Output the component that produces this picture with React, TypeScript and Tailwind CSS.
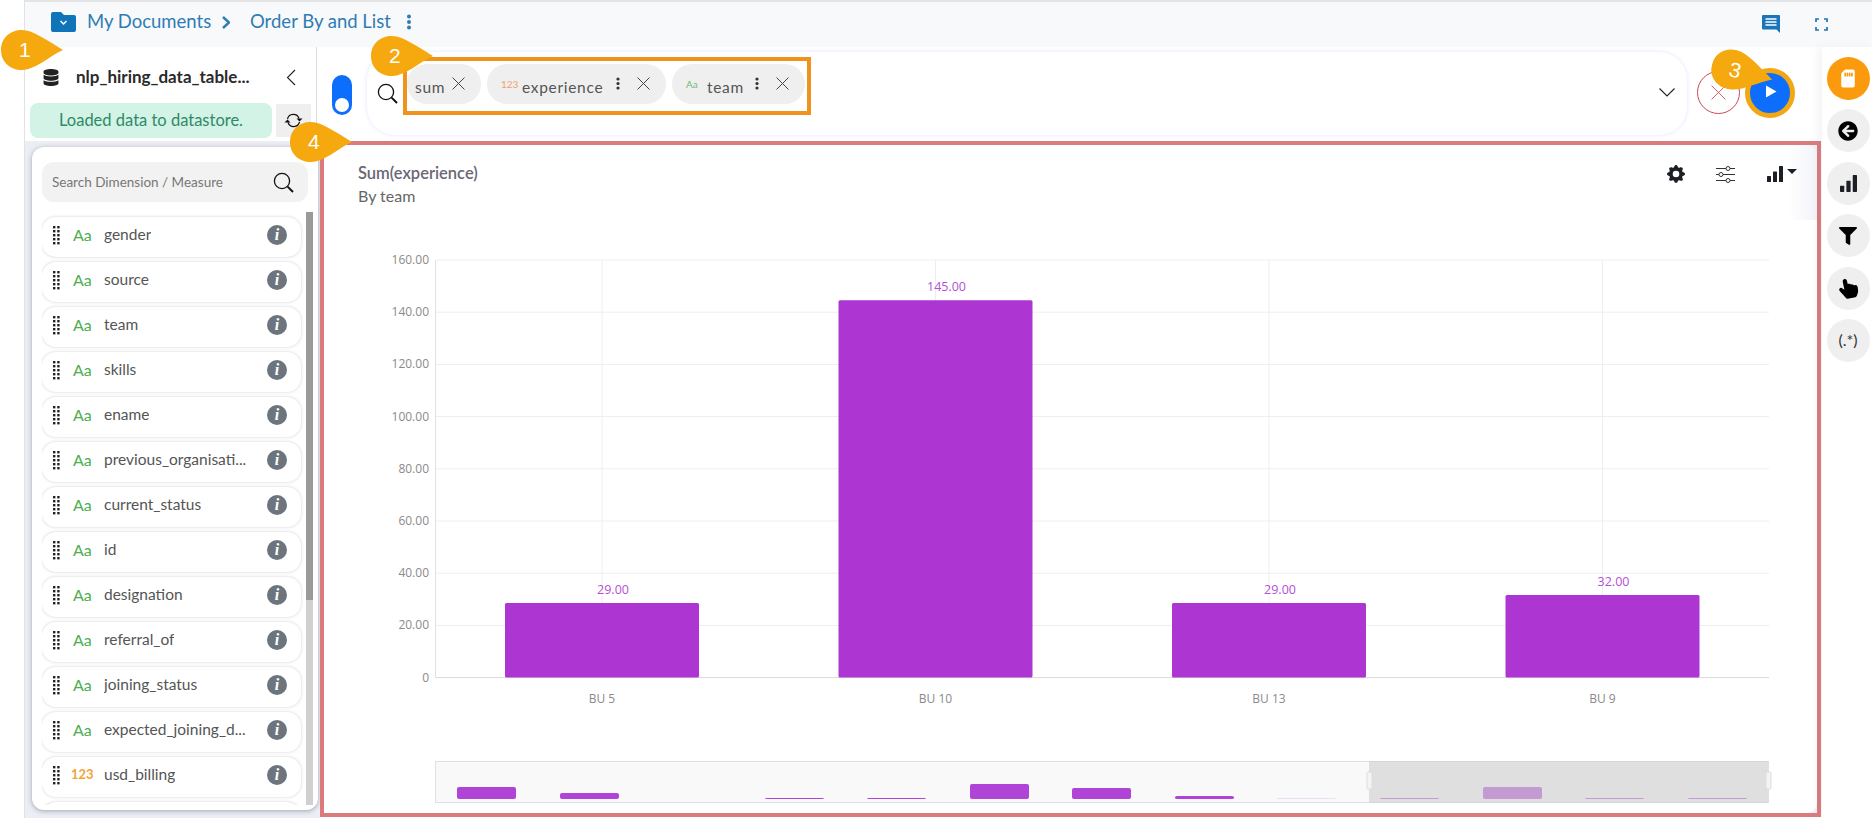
import React from "react";
import { BsGearFill, BsHandIndexThumbFill, BsSdCardFill } from "react-icons/bs";
import { FaArrowCircleLeft, FaDatabase, FaFilter } from "react-icons/fa";

const font = "font-['Lato','Noto_Sans',sans-serif]";

const fields = [
  { name: "gender", kind: "Aa" },
  { name: "source", kind: "Aa" },
  { name: "team", kind: "Aa" },
  { name: "skills", kind: "Aa" },
  { name: "ename", kind: "Aa" },
  { name: "previous_organisati...", kind: "Aa" },
  { name: "current_status", kind: "Aa" },
  { name: "id", kind: "Aa" },
  { name: "designation", kind: "Aa" },
  { name: "referral_of", kind: "Aa" },
  { name: "joining_status", kind: "Aa" },
  { name: "expected_joining_d...", kind: "Aa" },
  { name: "usd_billing", kind: "123" },
  { name: "", kind: "" },
];

// page coordinates minus the chart svg origin
const ox = 324;
const oy = 220;
const ticks = [160, 140, 120, 100, 80, 60, 40, 20, 0];
const bars = [
  { label: "BU 5", cx: 602, value: 29 },
  { label: "BU 10", cx: 935.5, value: 145 },
  { label: "BU 13", cx: 1269, value: 29 },
  { label: "BU 9", cx: 1602.5, value: 32 },
];
const mini = [
  [457, 787, 1],
  [560, 793, 1],
  [765, 798, 1],
  [867, 798, 1],
  [970, 784, 1],
  [1072, 788, 1],
  [1175, 796, 1],
  [1277, 798, 0.15],
  [1380, 798, 1],
  [1483, 787, 1],
  [1585, 798, 1],
  [1688, 798, 1],
];

function Callout({ n, className }: { n: string; className: string }) {
  return (
    <div className={`absolute z-20 h-[40px] w-[62px] ${className}`}>
      <svg viewBox="0 0 62 40" className="h-full w-full">
        <path d="M0 20C0 8 9 0 21 0C32 0 47 11 62 20C47 27 34 40 21 40C9 40 0 32 0 20Z" fill="#f6a90f" />
      </svg>
      <span className="absolute left-[18px] top-[6px] font-['Liberation_Sans',sans-serif] text-[21px] leading-[28px] text-white">{n}</span>
    </div>
  );
}

function Search({ size = 21 }: { size?: number }) {
  return (
    <svg width={size} height={size} viewBox="0 0 21 21" fill="none" stroke="#111">
      <circle cx="9" cy="9" r="7.6" strokeWidth="1.3" />
      <path d="M14.6 14.6L20 20" strokeWidth="2" />
    </svg>
  );
}

function Cross({ size = 13, color = "#444", weight = 1 }: { size?: number; color?: string; weight?: number }) {
  return (
    <svg width={size} height={size} viewBox="0 0 13 13" stroke={color} strokeWidth={weight}>
      <path d="M0.5 0.5L12.5 12.5M12.5 0.5L0.5 12.5" />
    </svg>
  );
}

function Kebab({ color = "#333", large }: { color?: string; large?: boolean }) {
  return (
    <svg width={large ? 6 : 4} height={large ? 16 : 13} viewBox="0 0 4 13" fill={color}>
      <circle cx="2" cy="2" r="1.6" />
      <circle cx="2" cy="6.5" r="1.6" />
      <circle cx="2" cy="11" r="1.6" />
    </svg>
  );
}

function Grip() {
  const dots = [];
  for (let r = 0; r < 5; r++) {
    dots.push(<rect key={`a${r}`} x="0" y={r * 4} width="2.4" height="2.4" />);
    dots.push(<rect key={`b${r}`} x="4.2" y={r * 4} width="2.4" height="2.4" />);
  }
  return (
    <svg width="7" height="19" viewBox="0 0 7 19" fill="#222" className="block">
      {dots}
    </svg>
  );
}

function BarsIcon({ size = 16 }: { size?: number }) {
  return (
    <svg width={size} height={size} viewBox="0 0 16 16" fill="#1c1f24">
      <rect x="0" y="10" width="4" height="6" rx="0.6" />
      <rect x="6" y="5.5" width="4" height="10.5" rx="0.6" />
      <rect x="12" y="0" width="4" height="16" rx="0.6" />
    </svg>
  );
}

function Chip({ badge, badgeClass, label, kebab, width }: { badge?: string; badgeClass?: string; label: string; kebab?: boolean; width: string }) {
  return (
    <div className={`flex h-[40px] items-center rounded-full bg-[#efefef] pb-[1px] ${width}`}>
      {badge && <span className={`ml-[14px] w-[21px] pt-[1px] text-[10px] ${badgeClass}`}>{badge}</span>}
      <span className={`pt-[8px] text-[15.5px] tracking-[0.7px] text-[#555] ${badge ? "" : "ml-[8px]"}`}>{label}</span>
      {kebab && (
        <span className="ml-auto flex items-center gap-[17px] pr-[16px]">
          <Kebab />
          <Cross />
        </span>
      )}
      {!kebab && (
        <span className="ml-[7px]">
          <Cross />
        </span>
      )}
    </div>
  );
}

function FieldRow({ name, kind }: { name: string; kind: string }) {
  return (
    <div className="flex h-[40px] w-[259px] shrink-0 items-center rounded-[14px] bg-white pb-[4px] shadow-[0_0_3px_rgba(60,60,90,0.25)]">
      <span className="ml-[11px] w-[8px]">{kind && <Grip />}</span>
      {kind === "123" ? (
        <span className="ml-[10px] w-[33px] text-[13px] font-bold text-[#f2a33a]">123</span>
      ) : (
        <span className="ml-[12px] w-[31px] text-[16px] text-[#4caf50]">{kind}</span>
      )}
      <span className="truncate text-[15.5px] text-[#555]">{name}</span>
      {kind && (
        <span className="ml-auto mr-[14px] flex h-[20px] w-[20px] shrink-0 items-center justify-center rounded-full bg-[#6c757d] font-['Liberation_Serif',serif] text-[16px] font-bold italic text-white">
          i
        </span>
      )}
    </div>
  );
}

function RailButton({ children, active }: { children: React.ReactNode; active?: boolean }) {
  return (
    <div className={`flex h-[43px] w-[43px] items-center justify-center rounded-full ${active ? "bg-[#fb9a0c]" : "bg-[#efefef]"}`}>
      {children}
    </div>
  );
}

function Chart() {
  const y = (v: number) => 677.6 - v * 2.61 - oy;
  return (
    <svg width="1493" height="593" className="block" fontFamily="'Open Sans', sans-serif" fontSize="12">
      {ticks.map((t) => (
        <g key={t}>
          <line x1={435.5 - ox} x2={1769 - ox} y1={y(t)} y2={y(t)} stroke={t === 0 ? "#d9d9d9" : "#eeeeee"} />
          <text x={429 - ox} y={y(t) + 4} textAnchor="end" fill="#8a8a8a">
            {t === 0 ? "0" : `${t}.00`}
          </text>
        </g>
      ))}
      <line x1={435.5 - ox} x2={435.5 - ox} y1={y(160)} y2={y(0)} stroke="#e2e2e2" />
      {bars.map((b) => (
        <g key={b.label}>
          <line x1={b.cx - ox} x2={b.cx - ox} y1={y(160)} y2={y(0)} stroke="#eeeeee" />
          <rect x={b.cx - 97 - ox} y={y(b.value) + 1} width="194" height={y(0) - y(b.value) - 1} rx="1.5" fill="#ad36d3" />
          <text x={b.cx + 11 - ox} y={y(b.value) - 8} textAnchor="middle" fill="#b44fd6" fontSize="12.5">
            {b.value.toFixed(2)}
          </text>
          <text x={b.cx - ox} y={703 - oy} textAnchor="middle" fill="#8a8a8a">
            {b.label}
          </text>
        </g>
      ))}
      {/* range slider under the plot */}
      <rect x={435.5 - ox} y={761.5 - oy} width="1333" height="41" fill="#f9f9f9" stroke="#e0e0e0" />
      {mini.map(([x, top, op]) => (
        <rect key={x} x={x - ox} y={top - oy} width="59" height={799 - top} rx="2" fill="#b044d6" opacity={op} />
      ))}
      <rect x={1369 - ox} y={761 - oy} width="399" height="42" fill="#cfcfcf" opacity="0.62" />
      <rect x={1367 - ox} y={772 - oy} width="5" height="17" rx="1" fill="#f4f4f4" stroke="#dddddd" />
      <rect x={1766 - ox} y={772 - oy} width="5" height="17" rx="1" fill="#f4f4f4" stroke="#dddddd" />
    </svg>
  );
}

export default function App() {
  return (
    <div className={`relative flex h-[818px] w-[1872px] overflow-hidden bg-white ${font}`}>
      <Callout n="1" className="left-[1px] top-[30px]" />
      <Callout n="2" className="left-[371px] top-[36px]" />
      <Callout n="3" className="left-[1711px] top-[52px] rotate-[14deg]" />
      <Callout n="4" className="left-[290px] top-[122px]" />

      <div className="w-[25px] shrink-0 border-r border-[#dfe3e8]" />

      <div className="flex min-w-0 flex-1 flex-col">
        {/* top bar */}
        <div className="flex h-[47px] shrink-0 items-center border-t-2 border-[#e4e4e4] bg-[#f8f9fb] pb-[5px] pl-[26px] text-[18.5px] text-[#2f7cb4]">
          <svg width="25" height="20" viewBox="0 0 25 20">
            <path d="M2 0H10L13 3H23A2 2 0 0 1 25 5V18A2 2 0 0 1 23 20H2A2 2 0 0 1 0 18V2A2 2 0 0 1 2 0Z" fill="#0f74b8" />
            <path d="M9.5 9L12.5 12L15.5 9" fill="none" stroke="#fff" strokeWidth="1.5" />
          </svg>
          <span className="ml-[11px] w-[126px] whitespace-nowrap">My Documents</span>
          <svg width="8" height="13" viewBox="0 0 8 13" fill="none" stroke="#2f7cb4" strokeWidth="2.4" className="ml-[9px]">
            <path d="M1 1L7 6.5L1 12" />
          </svg>
          <span className="ml-[20px] w-[146px] whitespace-nowrap">Order By and List</span>
          <span className="ml-[10px] flex">
            <Kebab color="#2f7cb4" large />
          </span>
          <span className="ml-auto flex items-center pt-[4px]">
            <svg width="18" height="18" viewBox="0 0 18 18">
              <path d="M1 0H17A1 1 0 0 1 18 1V18L14.5 14.5H1A1 1 0 0 1 0 13.5V1A1 1 0 0 1 1 0Z" fill="#1b75bb" />
              <path d="M3.5 4H14.5M3.5 7H14.5M3.5 10H14.5" stroke="#fff" strokeWidth="1.3" />
            </svg>
            <svg width="13" height="13" viewBox="0 0 13 13" fill="none" stroke="#1b75bb" strokeWidth="1.7" className="ml-[35px] mr-[44px]">
              <path d="M1 4V1H4M9 1H12V4M12 9V12H9M4 12H1V9" />
            </svg>
          </span>
        </div>

        <div className="flex min-h-0 flex-1">
          {/* data sidebar */}
          <div className="flex w-[295px] shrink-0 flex-col bg-[#eceef5]">
            <div className="h-[94px] shrink-0 bg-white pr-[3px]">
              <div className="flex h-full flex-col border-r border-[#dcdcdc] pl-[5px]">
                <div className="flex h-[56px] shrink-0 items-center pl-[13px] pt-[4px]">
                  <FaDatabase className="h-[17px] w-[16px] text-[#222]" />
                  <span className="ml-[17px] w-[190px] whitespace-nowrap text-[17px] font-bold text-[#2a2a2a]">nlp_hiring_data_table...</span>
                  <svg width="10" height="17" viewBox="0 0 10 17" fill="none" stroke="#222" strokeWidth="1.1" className="ml-[20px]">
                    <path d="M9 1L1.5 8.5L9 16" />
                  </svg>
                </div>
                <div className="flex items-start">
                  <div className="flex h-[35px] w-[242px] items-center justify-center rounded-[8px] bg-[#d2f3e5] text-[16.5px] text-[#2f8a68]">
                    Loaded data to datastore.
                  </div>
                  <div className="ml-[4px] mt-[1px] flex h-[33px] w-[35px] items-center justify-center bg-[#efefef]">
                    <svg width="19" height="17" viewBox="0 0 19 17" fill="none" stroke="#111" strokeWidth="1.2">
                      <path d="M3.5 7A6 6 0 0 1 15 6.5" />
                      <path d="M15.5 10A6 6 0 0 1 4 10.5" />
                      <path d="M12.5 6.5H18.5L15.5 9.5Z" fill="#111" stroke="none" />
                      <path d="M0.5 10.5H6.5L3.5 7.5Z" fill="#111" stroke="none" />
                    </svg>
                  </div>
                </div>
              </div>
            </div>

            <div className="ml-[7px] mt-[6px] flex h-[663px] w-[286px] flex-col rounded-[12px] bg-white shadow-[0_1px_5px_rgba(50,50,70,0.4)]">
              <div className="mx-[10px] mt-[15px] flex h-[40px] shrink-0 items-center justify-between rounded-[12px] bg-[#f2f2f2] pl-[10px] pr-[14px]">
                <span className="text-[13.5px] text-[#777]">Search Dimension / Measure</span>
                <Search />
              </div>
              <div className="mt-[10px] flex h-[593px] min-h-0">
                <div className="ml-[10px] flex w-[264px] flex-col gap-[5px] overflow-hidden pt-[5px]">
                  {fields.map((f, i) => (
                    <FieldRow key={i} name={f.name} kind={f.kind} />
                  ))}
                </div>
                <div className="h-full w-[7px] bg-[#d0d0d0]">
                  <div className="h-[388px] w-full bg-[#9a9a9a]" />
                </div>
              </div>
            </div>
          </div>

          {/* main content */}
          <div className="flex min-w-0 flex-1 flex-col">
            <div className="flex h-[94px] shrink-0 items-start pl-[12px]">
              <div className="relative mt-[28px] h-[40px] w-[20px] rounded-full bg-[#0d6efd]">
                <div className="absolute bottom-[3px] left-[3px] h-[14px] w-[14px] rounded-full bg-white" />
              </div>
              <div className="ml-[15px] mt-[5px] flex h-[83px] w-[1320px] items-start rounded-[28px] bg-white pl-[10px] shadow-[0_0_4px_rgba(90,130,255,0.2)]">
                <span className="mt-[31px]">
                  <Search />
                </span>
                <div className="ml-[5px] mt-[5px] flex h-[58px] w-[408px] gap-[6px] border-4 border-[#f0931e] pt-[3px]">
                  <Chip label="sum" width="w-[74px]" />
                  <Chip badge="123" badgeClass="text-[#f2a06a]" label="experience" kebab width="w-[179px]" />
                  <Chip badge="Aa" badgeClass="text-[#6fbb72]" label="team" kebab width="w-[133px]" />
                </div>
                <svg width="16" height="9" viewBox="0 0 16 9" fill="none" stroke="#222" strokeWidth="1.1" className="ml-auto mr-[12px] mt-[36px]">
                  <path d="M0.5 0.5L8 8L15.5 0.5" />
                </svg>
              </div>
              <div className="ml-[10px] mt-[24px] flex h-[43px] w-[43px] items-center justify-center rounded-full border border-[#c9485b]">
                <Cross size={15} color="#d8505f" weight={0.8} />
              </div>
              <div className="ml-[5px] mt-[21px] flex h-[50px] w-[50px] items-center justify-center rounded-full border-[5px] border-[#f3a712] bg-[#0d6efd]">
                <svg width="12" height="13" viewBox="0 0 12 13" fill="#fff" className="mb-[3px] ml-[2px]">
                  <path d="M1 0.5L11.5 6.5L1 12.5Z" />
                </svg>
              </div>
            </div>

            <div className="mr-[1px] h-[676px] border-4 border-[#dc7b7d] bg-[#eef0f8]">
              <div className="flex h-full flex-col rounded-br-[10px] rounded-tr-[12px] bg-white">
                <div className="flex h-[75px] shrink-0 justify-between rounded-tr-[12px] bg-gradient-to-l from-[#f3f4fa] to-white to-[2%] pl-[34px] pr-[20px] pt-[18px]">
                  <div>
                    <div className="text-[16.5px] font-semibold leading-[20px] text-[#6b6675]">Sum(experience)</div>
                    <div className="mt-[3px] text-[16px] leading-[20px] text-[#666]">By team</div>
                  </div>
                  <div className="flex h-[22px] items-center">
                    <BsGearFill className="h-[18px] w-[18px] text-[#1c1f24]" />
                    <svg width="19" height="17" viewBox="0 0 19 17" fill="none" stroke="#333" strokeWidth="1" className="ml-[31px]">
                      <path d="M0 2.5H10M14 2.5H19M0 8.5H3M7 8.5H19M0 14.5H10M14 14.5H19" />
                      <circle cx="12" cy="2.5" r="2" />
                      <circle cx="5" cy="8.5" r="2" />
                      <circle cx="12" cy="14.5" r="2" />
                    </svg>
                    <span className="ml-[32px]">
                      <BarsIcon />
                    </span>
                    <svg width="10" height="5" viewBox="0 0 10 5" fill="#1c1f24" className="mb-[5px] ml-[4px]">
                      <path d="M0 0H10L5 5Z" />
                    </svg>
                  </div>
                </div>
                <Chart />
              </div>
            </div>
          </div>

          {/* tool rail */}
          <div className="flex w-[50px] shrink-0 flex-col items-center gap-[9.4px] bg-white pl-[2px] pt-[10px] shadow-[-4px_0_8px_rgba(120,120,140,0.08)]">
            <RailButton active>
              <BsSdCardFill className="h-[21px] w-[18px] text-white" />
            </RailButton>
            <RailButton>
              <FaArrowCircleLeft className="h-[20px] w-[20px] text-black" />
            </RailButton>
            <RailButton>
              <BarsIcon size={17} />
            </RailButton>
            <RailButton>
              <FaFilter className="h-[18px] w-[18px] text-black" />
            </RailButton>
            <RailButton>
              <BsHandIndexThumbFill className="h-[21px] w-[20px] -rotate-12 text-black" />
            </RailButton>
            <RailButton>
              <span className="text-[16px] text-[#333]">(.*)</span>
            </RailButton>
          </div>
        </div>
      </div>
    </div>
  );
}
